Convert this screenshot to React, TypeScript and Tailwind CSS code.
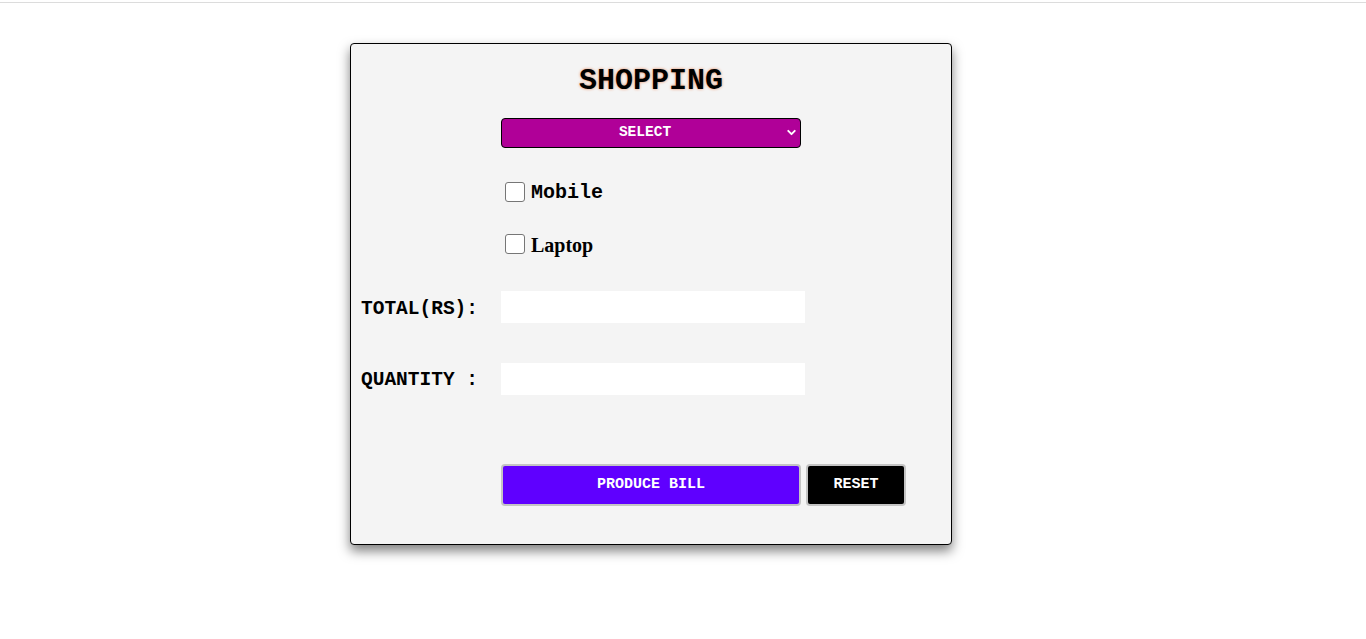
import { ChevronDown } from 'lucide-react';

export default function App() {
  const mono = { fontFamily: '"Liberation Mono", "DejaVu Sans Mono", monospace' };

  return (
    <div className="min-h-screen bg-white" style={mono}>
      {/* top rule */}
      <div className="pt-[2px]">
        <div className="h-[1px] bg-[#dcdcdc]"></div>
      </div>

      {/* Shopping card */}
      <div className="ml-[350px] mt-[40px] w-[602px] h-[502px] bg-[#f4f4f4] border border-black rounded-[4px] shadow-[0_6px_12px_rgba(0,0,0,0.5)] pt-[19px]">
        <h1 className="text-center text-[30px] leading-[36px] font-bold text-black [text-shadow:0_0_3px_#e8875a]">
          SHOPPING
        </h1>

        <div className="flex justify-center mt-[19px]">
          <div className="relative w-[300px] h-[30px]">
            <select
              className="appearance-none w-full h-full bg-[#b00098] text-white text-[14.5px] font-bold text-center pr-[12px] border border-black rounded-[4px] outline-none"
              style={mono}
              defaultValue="select"
            >
              <option value="select">SELECT</option>
              <option value="mobile">MOBILE</option>
              <option value="laptop">LAPTOP</option>
            </select>
            <ChevronDown className="absolute right-[3px] top-[8px] w-[13px] h-[13px] text-white pointer-events-none" strokeWidth={3.5} />
          </div>
        </div>

        {/* items */}
        <div className="pl-[154px]">
          <label className="flex items-center h-[24px] mt-[32px]">
            <input type="checkbox" className="appearance-none w-5 h-5 bg-white border border-[#767676] rounded-[3px]" />
            <span className="ml-[6px] pt-[2px] text-[20px] font-bold text-black" style={mono}>Mobile</span>
          </label>
          <label className="flex items-center h-[24px] mt-[28px]">
            <input type="checkbox" className="appearance-none w-5 h-5 bg-white border border-[#767676] rounded-[3px]" />
            <span className="ml-[6px] pt-[2px] text-[20px] font-bold text-black" style={{ fontFamily: '"Liberation Serif", serif' }}>Laptop</span>
          </label>
        </div>

        {/* fields */}
        <div className="pl-[10px]">
          <div className="flex items-start h-[32px] mt-[35px]">
            <span className="w-[140px] h-[32px] leading-[36px] text-[19.5px] font-bold text-black">TOTAL(RS):</span>
            <input type="text" className="w-[304px] h-[32px] bg-white outline-none" />
          </div>
          <div className="flex items-start h-[32px] mt-[40px]">
            <span className="w-[140px] h-[32px] leading-[34px] text-[19.5px] font-bold text-black">QUANTITY :</span>
            <input type="text" className="w-[304px] h-[32px] bg-white outline-none" />
          </div>
        </div>

        {/* actions */}
        <div className="flex pl-[150px] mt-[69px] gap-[5px]">
          <button
            className="w-[300px] h-[42px] bg-[#5f00ff] text-white text-[15px] font-bold border-2 border-[#c4c4c4] rounded-[4px]"
            style={mono}
          >
            PRODUCE BILL
          </button>
          <button
            className="w-[100px] h-[42px] bg-black text-white text-[15px] font-bold border-2 border-[#c4c4c4] rounded-[4px]"
            style={mono}
          >
            RESET
          </button>
        </div>
      </div>
    </div>
  );
}
